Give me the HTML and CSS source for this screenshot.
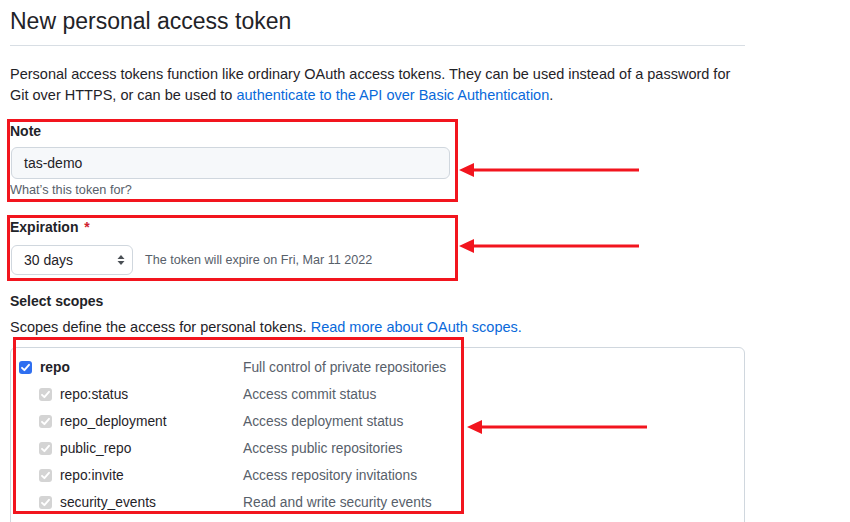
FILE: index.html
```html
<!DOCTYPE html>
<html>
<head>
<meta charset="utf-8">
<link rel="stylesheet" href="styles.css">
</head>
<body>
<div class="page">
  <h1 class="title">New personal access token</h1>
  <p class="intro">Personal access tokens function like ordinary OAuth access tokens. They can be used instead of a password for Git over HTTPS, or can be used to <a href="#">authenticate to the API over Basic Authentication</a>.</p>

  <div class="mark group-note">
    <label class="label">Note</label>
    <div class="input">tas-demo</div>
    <div class="hint">What’s this token for?</div>
  </div>

  <div class="mark group-exp">
    <label class="label">Expiration <span class="req">*</span></label>
    <div class="exp-row">
      <div class="select">30 days
        <svg class="updown" width="8" height="12" viewBox="0 0 8 12"><path d="M4 1 L7.5 5 H0.5 Z M4 11 L7.5 7 H0.5 Z" fill="#4a4f55"/></svg>
      </div>
      <span class="exp-note">The token will expire on Fri, Mar 11 2022</span>
    </div>
  </div>

  <h3 class="label scopes-title">Select scopes</h3>
  <p class="scopes-desc">Scopes define the access for personal tokens. <a href="#">Read more about OAuth scopes.</a></p>

  <div class="scopes-wrap">
    <div class="scopes">
      <div class="row">
        <div class="name-col"><span class="cb cb-on"><svg width="13" height="13" viewBox="0 0 13 13"><path d="M3 6.8 L5.4 9.2 L10 3.8" stroke="#fff" stroke-width="1.9" fill="none" stroke-linecap="round" stroke-linejoin="round"/></svg></span><b>repo</b></div>
        <div class="desc">Full control of private repositories</div>
      </div>
      <div class="row sub">
        <div class="name-col"><span class="cb cb-dis"><svg width="13" height="13" viewBox="0 0 13 13"><path d="M3 6.8 L5.4 9.2 L10 3.8" stroke="#fff" stroke-width="1.9" fill="none" stroke-linecap="round" stroke-linejoin="round"/></svg></span>repo:status</div>
        <div class="desc">Access commit status</div>
      </div>
      <div class="row sub">
        <div class="name-col"><span class="cb cb-dis"><svg width="13" height="13" viewBox="0 0 13 13"><path d="M3 6.8 L5.4 9.2 L10 3.8" stroke="#fff" stroke-width="1.9" fill="none" stroke-linecap="round" stroke-linejoin="round"/></svg></span>repo_deployment</div>
        <div class="desc">Access deployment status</div>
      </div>
      <div class="row sub">
        <div class="name-col"><span class="cb cb-dis"><svg width="13" height="13" viewBox="0 0 13 13"><path d="M3 6.8 L5.4 9.2 L10 3.8" stroke="#fff" stroke-width="1.9" fill="none" stroke-linecap="round" stroke-linejoin="round"/></svg></span>public_repo</div>
        <div class="desc">Access public repositories</div>
      </div>
      <div class="row sub">
        <div class="name-col"><span class="cb cb-dis"><svg width="13" height="13" viewBox="0 0 13 13"><path d="M3 6.8 L5.4 9.2 L10 3.8" stroke="#fff" stroke-width="1.9" fill="none" stroke-linecap="round" stroke-linejoin="round"/></svg></span>repo:invite</div>
        <div class="desc">Access repository invitations</div>
      </div>
      <div class="row sub">
        <div class="name-col"><span class="cb cb-dis"><svg width="13" height="13" viewBox="0 0 13 13"><path d="M3 6.8 L5.4 9.2 L10 3.8" stroke="#fff" stroke-width="1.9" fill="none" stroke-linecap="round" stroke-linejoin="round"/></svg></span>security_events</div>
        <div class="desc">Read and write security events</div>
      </div>
    </div>
    <div class="mark-overlay"></div>
  </div>

  <svg class="arrow arrow-1" width="180" height="16" viewBox="0 0 180 16"><path d="M0 8 L15 1 L15 15 Z" fill="#f2151e"/><rect x="12" y="6.5" width="168" height="3" fill="#f2151e"/></svg>
  <svg class="arrow arrow-2" width="180" height="16" viewBox="0 0 180 16"><path d="M0 8 L15 1 L15 15 Z" fill="#f2151e"/><rect x="12" y="6.5" width="168" height="3" fill="#f2151e"/></svg>
  <svg class="arrow arrow-3" width="180" height="16" viewBox="0 0 180 16"><path d="M0 8 L15 1 L15 15 Z" fill="#f2151e"/><rect x="12" y="6.5" width="168" height="3" fill="#f2151e"/></svg>
</div>
</body>
</html>
```
FILE: styles.css
```css
html, body {
  margin: 0;
  padding: 0;
  background: #fff;
  overflow: hidden;
}
body {
  font-family: "Liberation Sans", Arial, sans-serif;
  color: #1f2328;
  font-size: 14px;
}
a {
  color: #0969da;
  text-decoration: none;
}
.page {
  position: relative;
  width: 735px;
  padding: 0 10px;
  height: 522px;
}
.title {
  margin: 0;
  padding: 5px 0 8px;
  font-size: 23px;
  font-weight: 400;
  line-height: 32px;
  border-bottom: 1px solid #d8dee4;
}
.intro {
  margin: 18px 0 0;
  font-size: 14.5px;
  line-height: 21px;
}
.mark {
  border: 3px solid #f2151e;
  margin-left: -3px;
  width: 445px;
}
.group-note {
  margin-top: 13px;
}
.label {
  display: block;
  font-weight: 700;
  font-size: 14px;
  line-height: 18px;
  margin: 0;
}
.input {
  margin: 7px 0 0 1px;
  width: 413px;
  height: 30px;
  padding: 0 12px;
  border: 1px solid #d0d7de;
  border-radius: 6px;
  background: #f6f8fa;
  line-height: 30px;
  font-size: 14px;
}
.hint {
  font-size: 12.7px;
  line-height: 17px;
  color: #57606a;
  margin-top: 3px;
}
.group-exp {
  margin-top: 13px;
  padding-bottom: 3px;
}
.req {
  color: #cf222e;
  margin-left: 2px;
}
.exp-row {
  display: flex;
  align-items: center;
  gap: 12px;
  margin-top: 9px;
}
.select {
  margin-left: 1px;
  width: 96px;
  height: 28px;
  padding: 0 12px;
  border: 1px solid #d0d7de;
  border-radius: 6px;
  background: #fff;
  line-height: 28px;
  display: flex;
  align-items: center;
  justify-content: space-between;
  font-size: 14px;
}
.updown {
  margin-right: -5px;
}
.exp-note {
  font-size: 12.6px;
  color: #57606a;
}
.scopes-title {
  margin-top: 11px;
}
.scopes-desc {
  margin: 7px 0 0;
  font-size: 14.5px;
  line-height: 21px;
}
.scopes-wrap {
  position: relative;
  margin-top: 9px;
}
.scopes {
  border: 1px solid #d0d7de;
  border-radius: 6px;
  padding: 6px 0 30px;
  font-size: 13.8px;
}
.row {
  display: flex;
  align-items: center;
  height: 27px;
  padding-left: 8px;
}
.row.sub {
  padding-left: 28px;
}
.name-col {
  display: flex;
  align-items: center;
  gap: 8px;
  width: 224px;
}
.row.sub .name-col {
  width: 204px;
  color: #1f2328;
}
.desc {
  color: #57606a;
}
.cb {
  display: inline-flex;
  width: 13px;
  height: 13px;
  border-radius: 3px;
  box-sizing: border-box;
}
.cb-on {
  background: #2f6ff0;
}
.cb-dis {
  background: #d4d4d4;
}
.mark-overlay {
  position: absolute;
  left: 3px;
  top: -10px;
  width: 445px;
  height: 171px;
  border: 3px solid #f2151e;
}
.arrow {
  position: absolute;
}
.arrow-1 {
  left: 459px;
  top: 162px;
}
.arrow-2 {
  left: 459px;
  top: 238px;
}
.arrow-3 {
  left: 467px;
  top: 419px;
}
```
